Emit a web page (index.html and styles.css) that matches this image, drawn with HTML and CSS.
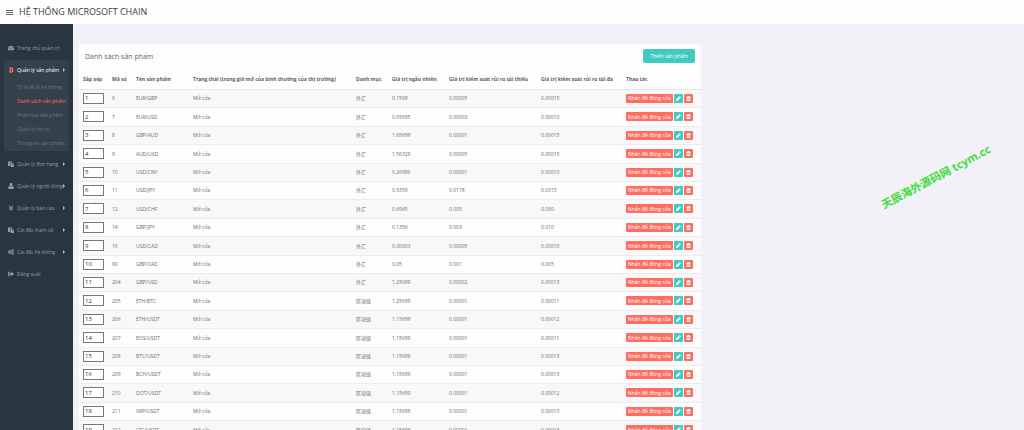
FILE: index.html
```html
<!DOCTYPE html>
<html lang="vi">
<head>
<meta charset="utf-8">
<title>HỆ THỐNG MICROSOFT CHAIN</title>
<link rel="stylesheet" href="styles.css">
</head>
<body>
<svg class="sprite" aria-hidden="true">
  <symbol id="i-dash" viewBox="0 0 16 16"><path d="M8 2a8 8 0 0 0-8 8v4h16v-4a8 8 0 0 0-8-8zM3 11a1.200 1.200 0 1 1 0-2.400A1.200 1.200 0 0 1 3 11zm1.800-4a1.200 1.200 0 1 1 0-2.400 1.200 1.200 0 0 1 0 2.400zM9 12H7l1.400-6L9.500 6zM12 7a1.200 1.200 0 1 1 0-2.400A1.200 1.200 0 0 1 12 7z"/></symbol>
  <symbol id="i-btc" viewBox="0 0 16 16"><path fill-rule="evenodd" d="M3 2h3V0h2v2h1V0h2v2.300c2 .4 3 1.400 3 3 0 1.100-.5 2-1.500 2.500 1.400.4 2.200 1.400 2.200 2.900 0 2-1.300 3-3.700 3.300v2H9v-2H8v2H6v-2H3v-2h1.500V4H3zm4 2.200v2.800h1.500c1.500 0 2.200-.5 2.200-1.400S10 4.200 8.500 4.200zm0 4.600v3h2c1.400 0 2.200-.5 2.200-1.500s-.8-1.500-2.200-1.500z"/></symbol>
  <symbol id="i-paste" viewBox="0 0 16 16"><path fill-rule="evenodd" d="M0 1h3V0h5v1h3v3H6v9H0zM3 2v1h5V2zM7 5h5v4h4v7H7zm6 0l3 3h-3z"/></symbol>
  <symbol id="i-user" viewBox="0 0 16 16"><path d="M8 0c2.500 0 4 1.800 4 4.200C12 6.800 10.300 9 8 9S4 6.800 4 4.200C4 1.800 5.500 0 8 0zM4 8c2 2.600 6 2.600 8 0 2.500.6 3.500 3 3.500 6 0 1-.7 2-2 2h-11c-1.300 0-2-1-2-2 0-3 1-5.400 3.500-6z"/></symbol>
  <symbol id="i-yen" viewBox="0 0 16 16"><path d="M2 1h3l3 6 3-6h3l-3.500 6.500H13V9H9.300v1.500H13V12H9.300v3H6.700v-3H3v-1.500h3.700V9H3V7.500h2.500z"/></symbol>
  <symbol id="i-cogs" viewBox="0 0 16 16"><path fill-rule="evenodd" d="M4 3h2l.4 1.600 1.600-.8L9.400 5.200l-.8 1.500 1.400.5v2l-1.500.4.8 1.600L8 12.100l-1.600-.8L6 13H4l-.5-1.600-1.600.8-1.400-1.400.9-1.600L0 8.800v-2l1.500-.4-.8-1.500L2.100 3.700l1.500.8zm1 3.200a1.800 1.800 0 1 0 0 3.600 1.800 1.800 0 0 0 0-3.600zM12.500 0l1 1.300 1.500-.2.300 1.600L16 4l-1 1.200.1 1.600-1.600.1-1 1.100-1-1.200-1.500.2V5.400L9 4l1-1.200V1.200l1.600.2zm0 2.800a1.200 1.200 0 1 0 0 2.400 1.200 1.200 0 0 0 0-2.400zM12.500 8l1 1.300 1.500-.2.300 1.600.7 1.300-1 1.200.1 1.600-1.600.1-1 1.100-1-1.200-1.500.2v-1.600L9 12l1-1.200V9.200l1.600.2zm0 2.800a1.200 1.200 0 1 0 0 2.400 1.200 1.200 0 0 0 0-2.400z"/></symbol>
  <symbol id="i-out" viewBox="0 0 16 16"><path d="M6 2v2H2.500v8H6v2H2c-1.200 0-2-.8-2-2V4c0-1.200.8-2 2-2zm3.500 0L16 8l-6.500 6v-3.500H4.500v-5h5z"/></symbol>
  <symbol id="i-pencil" viewBox="0 0 16 16"><path d="M11.500 0L16 4.500l-2 2L9.500 2zM8.500 3L13 7.500 5 15.500l-5 .5.5-5z"/></symbol>
  <symbol id="i-trash" viewBox="0 0 16 16"><path fill-rule="evenodd" d="M5.500 0h5l1 2.500H15v2h-1.200V16H2.200V4.500H1v-2h3.500zM4.500 6v7.500H6V6zm2.800 0v7.500h1.400V6zM10 6v7.500h1.500V6z"/></symbol>
</svg>

<header class="topbar">
  <button class="menu-toggle" type="button" aria-label="Menu"><span></span><span></span><span></span></button>
  <h1 class="brand">HỆ THỐNG MICROSOFT CHAIN</h1>
</header>

<div class="shell">
  <nav class="sidebar">
    <ul class="menu">
      <li class="menu-item"><a class="menu-link" href="#"><svg class="icon"><use href="#i-dash"/></svg>Trang chủ quản trị</a></li>
      <li class="menu-item open"><a class="menu-link" href="#"><svg class="icon"><use href="#i-btc"/></svg>Quản lý sản phẩm<span class="caret"></span></a>
        <ul class="submenu">
          <li><a href="#">Tỷ lệ lãi lỗ hệ thống</a></li>
          <li><a class="current" href="#">Danh sách sản phẩm</a></li>
          <li><a href="#">Phân loại sản phẩm</a></li>
          <li><a href="#">Quản lý rủi ro</a></li>
          <li><a href="#">Thùng rác sản phẩm</a></li>
        </ul>
      </li>
      <li class="menu-item"><a class="menu-link" href="#"><svg class="icon"><use href="#i-paste"/></svg>Quản lý đơn hàng<span class="caret"></span></a></li>
      <li class="menu-item"><a class="menu-link" href="#"><svg class="icon"><use href="#i-user"/></svg>Quản lý người dùng<span class="caret"></span></a></li>
      <li class="menu-item"><a class="menu-link" href="#"><svg class="icon"><use href="#i-yen"/></svg>Quản lý báo cáo<span class="caret"></span></a></li>
      <li class="menu-item"><a class="menu-link" href="#"><svg class="icon"><use href="#i-paste"/></svg>Cài đặt tham số<span class="caret"></span></a></li>
      <li class="menu-item"><a class="menu-link" href="#"><svg class="icon"><use href="#i-cogs"/></svg>Cài đặt hệ thống<span class="caret"></span></a></li>
      <li class="menu-item"><a class="menu-link" href="#"><svg class="icon"><use href="#i-out"/></svg>Đăng xuất</a></li>
    </ul>
  </nav>

  <main class="content">
    <section class="panel">
      <div class="panel-head">
        <h2 class="panel-title">Danh sách sản phẩm</h2>
        <button class="add" type="button">Thêm sản phẩm</button>
      </div>
      <table class="products">
        <colgroup><col class="c-sort"><col class="c-id"><col class="c-name"><col class="c-state"><col class="c-cat"><col class="c-rand"><col class="c-min"><col class="c-max"><col class="c-act"></colgroup>
        <thead>
          <tr><th>Sắp xếp</th><th>Mã số</th><th>Tên sản phẩm</th><th>Trạng thái (trong giờ mở của bình thường của thị trường)</th><th>Danh mục</th><th>Giá trị ngẫu nhiên</th><th>Giá trị kiểm soát rủi ro tối thiểu</th><th>Giá trị kiểm soát rủi ro tối đa</th><th>Thao tác</th></tr>
        </thead>
        <tbody>
          <tr><td><input class="sort" aria-label="Sắp xếp" value="1"></td><td>6</td><td>EUR/GBP</td><td>Mở cửa</td><td>外汇</td><td>0.1569</td><td>0.00005</td><td>0.00015</td><td><div class="actions"><button class="btn close" type="button">Nhấn để đóng cửa</button><button class="btn edit" type="button" aria-label="Sửa"><svg><use href="#i-pencil"/></svg></button><button class="btn del" type="button" aria-label="Xóa"><svg><use href="#i-trash"/></svg></button></div></td></tr>
          <tr><td><input class="sort" aria-label="Sắp xếp" value="2"></td><td>7</td><td>EUR/USD</td><td>Mở cửa</td><td>外汇</td><td>0.65695</td><td>0.00003</td><td>0.00010</td><td><div class="actions"><button class="btn close" type="button">Nhấn để đóng cửa</button><button class="btn edit" type="button" aria-label="Sửa"><svg><use href="#i-pencil"/></svg></button><button class="btn del" type="button" aria-label="Xóa"><svg><use href="#i-trash"/></svg></button></div></td></tr>
          <tr><td><input class="sort" aria-label="Sắp xếp" value="3"></td><td>8</td><td>GBP/AUD</td><td>Mở cửa</td><td>外汇</td><td>1.65699</td><td>0.00001</td><td>0.00015</td><td><div class="actions"><button class="btn close" type="button">Nhấn để đóng cửa</button><button class="btn edit" type="button" aria-label="Sửa"><svg><use href="#i-pencil"/></svg></button><button class="btn del" type="button" aria-label="Xóa"><svg><use href="#i-trash"/></svg></button></div></td></tr>
          <tr><td><input class="sort" aria-label="Sắp xếp" value="4"></td><td>9</td><td>AUD/USD</td><td>Mở cửa</td><td>外汇</td><td>1.56329</td><td>0.00005</td><td>0.00015</td><td><div class="actions"><button class="btn close" type="button">Nhấn để đóng cửa</button><button class="btn edit" type="button" aria-label="Sửa"><svg><use href="#i-pencil"/></svg></button><button class="btn del" type="button" aria-label="Xóa"><svg><use href="#i-trash"/></svg></button></div></td></tr>
          <tr><td><input class="sort" aria-label="Sắp xếp" value="5"></td><td>10</td><td>USD/CNY</td><td>Mở cửa</td><td>外汇</td><td>0.26986</td><td>0.00001</td><td>0.00010</td><td><div class="actions"><button class="btn close" type="button">Nhấn để đóng cửa</button><button class="btn edit" type="button" aria-label="Sửa"><svg><use href="#i-pencil"/></svg></button><button class="btn del" type="button" aria-label="Xóa"><svg><use href="#i-trash"/></svg></button></div></td></tr>
          <tr><td><input class="sort" aria-label="Sắp xếp" value="6"></td><td>11</td><td>USD/JPY</td><td>Mở cửa</td><td>外汇</td><td>0.5359</td><td>0.0118</td><td>0.0315</td><td><div class="actions"><button class="btn close" type="button">Nhấn để đóng cửa</button><button class="btn edit" type="button" aria-label="Sửa"><svg><use href="#i-pencil"/></svg></button><button class="btn del" type="button" aria-label="Xóa"><svg><use href="#i-trash"/></svg></button></div></td></tr>
          <tr><td><input class="sort" aria-label="Sắp xếp" value="7"></td><td>12</td><td>USD/CHF</td><td>Mở cửa</td><td>外汇</td><td>0.6965</td><td>0.005</td><td>0.030</td><td><div class="actions"><button class="btn close" type="button">Nhấn để đóng cửa</button><button class="btn edit" type="button" aria-label="Sửa"><svg><use href="#i-pencil"/></svg></button><button class="btn del" type="button" aria-label="Xóa"><svg><use href="#i-trash"/></svg></button></div></td></tr>
          <tr><td><input class="sort" aria-label="Sắp xếp" value="8"></td><td>14</td><td>GBP/JPY</td><td>Mở cửa</td><td>外汇</td><td>0.1356</td><td>0.003</td><td>0.010</td><td><div class="actions"><button class="btn close" type="button">Nhấn để đóng cửa</button><button class="btn edit" type="button" aria-label="Sửa"><svg><use href="#i-pencil"/></svg></button><button class="btn del" type="button" aria-label="Xóa"><svg><use href="#i-trash"/></svg></button></div></td></tr>
          <tr><td><input class="sort" aria-label="Sắp xếp" value="9"></td><td>16</td><td>USD/CAD</td><td>Mở cửa</td><td>外汇</td><td>0.00003</td><td>0.00005</td><td>0.00010</td><td><div class="actions"><button class="btn close" type="button">Nhấn để đóng cửa</button><button class="btn edit" type="button" aria-label="Sửa"><svg><use href="#i-pencil"/></svg></button><button class="btn del" type="button" aria-label="Xóa"><svg><use href="#i-trash"/></svg></button></div></td></tr>
          <tr><td><input class="sort" aria-label="Sắp xếp" value="10"></td><td>90</td><td>GBP/CAD</td><td>Mở cửa</td><td>外汇</td><td>0.05</td><td>0.001</td><td>0.005</td><td><div class="actions"><button class="btn close" type="button">Nhấn để đóng cửa</button><button class="btn edit" type="button" aria-label="Sửa"><svg><use href="#i-pencil"/></svg></button><button class="btn del" type="button" aria-label="Xóa"><svg><use href="#i-trash"/></svg></button></div></td></tr>
          <tr><td><input class="sort" aria-label="Sắp xếp" value="11"></td><td>204</td><td>GBP/USD</td><td>Mở cửa</td><td>外汇</td><td>1.25699</td><td>0.00002</td><td>0.00013</td><td><div class="actions"><button class="btn close" type="button">Nhấn để đóng cửa</button><button class="btn edit" type="button" aria-label="Sửa"><svg><use href="#i-pencil"/></svg></button><button class="btn del" type="button" aria-label="Xóa"><svg><use href="#i-trash"/></svg></button></div></td></tr>
          <tr><td><input class="sort" aria-label="Sắp xếp" value="12"></td><td>205</td><td>ETH/BTC</td><td>Mở cửa</td><td>区块链</td><td>1.25699</td><td>0.00001</td><td>0.00011</td><td><div class="actions"><button class="btn close" type="button">Nhấn để đóng cửa</button><button class="btn edit" type="button" aria-label="Sửa"><svg><use href="#i-pencil"/></svg></button><button class="btn del" type="button" aria-label="Xóa"><svg><use href="#i-trash"/></svg></button></div></td></tr>
          <tr><td><input class="sort" aria-label="Sắp xếp" value="13"></td><td>206</td><td>ETH/USDT</td><td>Mở cửa</td><td>区块链</td><td>1.15699</td><td>0.00001</td><td>0.00012</td><td><div class="actions"><button class="btn close" type="button">Nhấn để đóng cửa</button><button class="btn edit" type="button" aria-label="Sửa"><svg><use href="#i-pencil"/></svg></button><button class="btn del" type="button" aria-label="Xóa"><svg><use href="#i-trash"/></svg></button></div></td></tr>
          <tr><td><input class="sort" aria-label="Sắp xếp" value="14"></td><td>207</td><td>EOS/USDT</td><td>Mở cửa</td><td>区块链</td><td>1.15699</td><td>0.00001</td><td>0.00011</td><td><div class="actions"><button class="btn close" type="button">Nhấn để đóng cửa</button><button class="btn edit" type="button" aria-label="Sửa"><svg><use href="#i-pencil"/></svg></button><button class="btn del" type="button" aria-label="Xóa"><svg><use href="#i-trash"/></svg></button></div></td></tr>
          <tr><td><input class="sort" aria-label="Sắp xếp" value="15"></td><td>208</td><td>BTC/USDT</td><td>Mở cửa</td><td>区块链</td><td>1.15699</td><td>0.00001</td><td>0.00013</td><td><div class="actions"><button class="btn close" type="button">Nhấn để đóng cửa</button><button class="btn edit" type="button" aria-label="Sửa"><svg><use href="#i-pencil"/></svg></button><button class="btn del" type="button" aria-label="Xóa"><svg><use href="#i-trash"/></svg></button></div></td></tr>
          <tr><td><input class="sort" aria-label="Sắp xếp" value="16"></td><td>209</td><td>BCH/USDT</td><td>Mở cửa</td><td>区块链</td><td>1.15699</td><td>0.00001</td><td>0.00013</td><td><div class="actions"><button class="btn close" type="button">Nhấn để đóng cửa</button><button class="btn edit" type="button" aria-label="Sửa"><svg><use href="#i-pencil"/></svg></button><button class="btn del" type="button" aria-label="Xóa"><svg><use href="#i-trash"/></svg></button></div></td></tr>
          <tr><td><input class="sort" aria-label="Sắp xếp" value="17"></td><td>210</td><td>DOT/USDT</td><td>Mở cửa</td><td>区块链</td><td>1.15699</td><td>0.00001</td><td>0.00012</td><td><div class="actions"><button class="btn close" type="button">Nhấn để đóng cửa</button><button class="btn edit" type="button" aria-label="Sửa"><svg><use href="#i-pencil"/></svg></button><button class="btn del" type="button" aria-label="Xóa"><svg><use href="#i-trash"/></svg></button></div></td></tr>
          <tr><td><input class="sort" aria-label="Sắp xếp" value="18"></td><td>211</td><td>XRP/USDT</td><td>Mở cửa</td><td>区块链</td><td>1.15699</td><td>0.00001</td><td>0.00013</td><td><div class="actions"><button class="btn close" type="button">Nhấn để đóng cửa</button><button class="btn edit" type="button" aria-label="Sửa"><svg><use href="#i-pencil"/></svg></button><button class="btn del" type="button" aria-label="Xóa"><svg><use href="#i-trash"/></svg></button></div></td></tr>
          <tr><td><input class="sort" aria-label="Sắp xếp" value="19"></td><td>212</td><td>LTC/USDT</td><td>Mở cửa</td><td>区块链</td><td>1.15699</td><td>0.00001</td><td>0.00013</td><td><div class="actions"><button class="btn close" type="button">Nhấn để đóng cửa</button><button class="btn edit" type="button" aria-label="Sửa"><svg><use href="#i-pencil"/></svg></button><button class="btn del" type="button" aria-label="Xóa"><svg><use href="#i-trash"/></svg></button></div></td></tr>
        </tbody>
      </table>
    </section>
    <div class="watermark">天辰海外源码网 tcym.cc</div>
  </main>
</div>
</body>
</html>
```
FILE: styles.css
```css
* { box-sizing: border-box; }
body {
  margin: 0;
  height: 100vh;
  overflow: hidden;
  display: flex;
  flex-direction: column;
  background: #f1f1f7;
  color: #6c6c6c;
  font-family: "Open Sans", "Noto Sans CJK SC", sans-serif;
  font-size: 5px;
  line-height: 8px;
}
button, input { font: inherit; margin: 0; }
button { border: 0; cursor: pointer; }
ul { list-style: none; margin: 0; padding: 0; }
a { color: inherit; text-decoration: none; }
svg { display: block; fill: currentColor; }
.sprite { position: absolute; width: 0; height: 0; }

.topbar {
  flex: none;
  display: flex;
  align-items: center;
  gap: 6px;
  height: 24px;
  padding: 0 6px;
  background: #fefefe;
}
.menu-toggle {
  display: flex;
  flex-direction: column;
  gap: 1px;
  width: 7px;
  padding: 0;
  background: none;
}
.menu-toggle span { height: 1px; background: #666; }
.brand { margin: 0; font-size: 9px; font-weight: 400; line-height: 12px; color: #3c3c3c; }

.shell { flex: 1; min-height: 0; display: flex; }
.sidebar { flex: none; width: 73px; padding: 13px 4px 0; background: #2a3542; color: #929ba5; }
.menu-link { display: flex; align-items: center; height: 22px; padding: 0 4px; white-space: nowrap; }
.icon { flex: none; width: 6px; height: 6px; margin-right: 3px; }
.caret { margin-left: auto; border: 2px solid transparent; border-left-color: #b5bcc4; border-right-width: 0; }
.open { margin: 1px 0 2px; padding-bottom: 1px; border-radius: 2px; background: #35404d; color: #fff; }
.open .menu-link { height: 20px; }
.open .icon { color: #ff6c60; }
.submenu a { display: flex; align-items: center; height: 14px; padding-left: 13px; color: #6f7985; white-space: nowrap; }
.submenu .current { color: #ff6c60; }

.content {
  flex: 1;
  min-width: 0;
  display: grid;
  grid-template-columns: 2fr 1fr;
  align-items: start;
  gap: 6px;
  padding: 20px 6px 0;
}
.panel { min-width: 0; background: #fdfdfd; border-radius: 2px; }
.panel-head { display: flex; align-items: flex-start; justify-content: space-between; padding: 5px 6px; }
.panel-title { margin: 0; font-size: 7px; font-weight: 400; line-height: 16px; color: #666; }
.add { height: 14px; padding: 0 7px; border-radius: 2px; background: #41cac0; color: #fff; }

.products { width: 100%; table-layout: fixed; border-collapse: collapse; }
.c-sort { width: 29px; }
.c-id { width: 24px; }
.c-name { width: 57px; }
.c-state { width: 163px; }
.c-cat { width: 36px; }
.c-rand { width: 57px; }
.c-min { width: 92px; }
.c-max { width: 85px; }
.c-act { width: 79px; }
th, td { padding: 0 0 0 4px; text-align: left; white-space: nowrap; }
th { height: 19px; color: #606060; font-weight: 700; border-bottom: 1px solid #e6e6e8; }
td { height: 18px; border-bottom: 1px solid #ececee; }
tbody tr:nth-child(odd) { background: #f8f8fa; }
tbody tr:nth-child(5n+2) td,
tbody tr:nth-child(5n+4) td { height: 19px; }
.sort {
  display: block;
  width: 21px;
  height: 11px;
  padding: 0 1px;
  border: 1px solid #777;
  border-radius: 0;
  background: #fff;
  color: #333;
  font-size: 6px;
}
.actions { display: flex; gap: 1px; }
.btn { display: flex; align-items: center; justify-content: center; height: 9px; padding: 0 2px; border-radius: 1px; color: #fff; background: #ff6c60; }
.btn svg { width: 5px; height: 5px; }
.edit { background: #41cac0; }

.watermark {
  justify-self: end;
  margin: 125px 21px 0 0;
  transform: rotate(-28deg);
  color: #3fdc3a;
  font-size: 11px;
  font-weight: 700;
  line-height: 16px;
  white-space: nowrap;
}
```
